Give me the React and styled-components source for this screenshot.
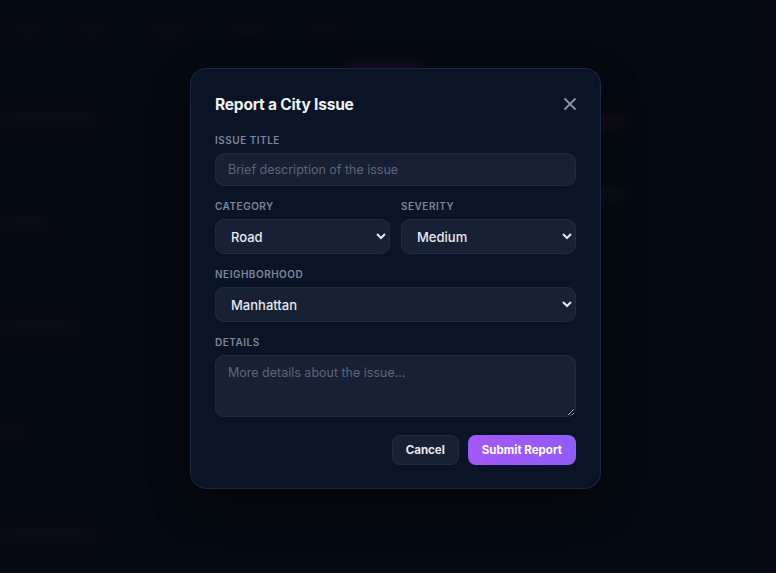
import React from 'react'
import styled, { createGlobalStyle } from 'styled-components'

const Global = createGlobalStyle`
  html, body {
    margin: 0;
    padding: 0;
    background: #070b15;
    font-family: Inter, "Noto Sans", sans-serif;
    color-scheme: dark;
  }
  * { box-sizing: border-box; }
`

const Page = styled.div`
  position: relative;
  width: 776px;
  height: 573px;
  overflow: hidden;
  background: #070b15;
`

/* blurred dashboard behind the modal */
const Backdrop = styled.div`
  height: 100%;
  display: flex;
  flex-direction: column;
  filter: blur(6px);
  opacity: 0.45;
`

const Nav = styled.nav`
  display: flex;
  gap: 38px;
  padding: 26px 0 0 10px;
  height: 60px;
`

const NavItem = styled.span`
  width: ${p => p.$w}px;
  height: 8px;
  border-radius: 4px;
  background: #1a2235;
`

const Body = styled.div`
  display: grid;
  grid-template-columns: 190px 1fr 200px;
  flex: 1;
`

const SideList = styled.div`
  display: flex;
  flex-direction: column;
  gap: 90px;
  padding-top: 52px;
`

const SideItem = styled.div`
  width: ${p => p.$w}px;
  height: 14px;
  border-radius: 6px;
  background: #1a2235;
`

const Center = styled.div`
  display: flex;
  flex-direction: column;
  align-items: center;
  padding-top: 4px;
`

const Pill = styled.div`
  width: 80px;
  height: 12px;
  border-radius: 6px;
  background: #4b2a7a;
`

const RightList = styled.div`
  display: flex;
  flex-direction: column;
  gap: 60px;
  padding: 56px 0 0 10px;
`

const Dot = styled.div`
  width: 40px;
  height: 12px;
  border-radius: 6px;
  background: ${p => p.$c};
`

const Overlay = styled.div`
  position: absolute;
  inset: 0;
  background: rgba(4, 7, 14, 0.45);
  display: flex;
  justify-content: center;
  padding-top: 68px;
  padding-left: 15px;
`

const Modal = styled.div`
  width: 411px;
  height: 421px;
  background: #0b1427;
  border: 1px solid #1c2740;
  border-radius: 16px;
  padding: 25px 24px 24px;
  box-shadow: 0 16px 40px rgba(0, 0, 0, 0.35);
  display: flex;
  flex-direction: column;
`

const Header = styled.div`
  display: flex;
  align-items: center;
  justify-content: space-between;
  margin-bottom: 20px;
`

const Title = styled.h2`
  margin: 0;
  font-size: 15.5px;
  font-weight: 700;
  color: #eef1f6;
  letter-spacing: -0.2px;
`

const Close = styled.button`
  border: 0;
  background: none;
  padding: 0;
  margin-right: -4px;
  display: flex;
  color: #8a95a8;
  cursor: pointer;
`

const Field = styled.div`
  display: flex;
  flex-direction: column;
  gap: 7px;
  margin-bottom: 14px;
`

const Row = styled.div`
  display: grid;
  grid-template-columns: 1fr 1fr;
  gap: 11px;
`

const Label = styled.label`
  font-size: 10px;
  font-weight: 600;
  letter-spacing: 0.5px;
  text-transform: uppercase;
  color: #7c879b;
`

const controlBase = `
  width: 100%;
  background: #172034;
  border: 1px solid #222c40;
  border-radius: 9px;
  font-family: Inter, "Noto Sans", sans-serif;
  color: #e6eaf1;
  outline: none;
  &::placeholder { color: #5d6679; }
`

const Input = styled.input`
  ${controlBase}
  height: 33px;
  padding: 0 12px;
  font-size: 12.5px;
`

const Select = styled.select`
  ${controlBase}
  height: 35px;
  padding: 0 4px 0 11px;
  font-size: 13px;
  font-weight: 500;
`

const TextArea = styled.textarea`
  ${controlBase}
  height: 62px;
  padding: 9px 12px;
  font-size: 12.5px;
  resize: vertical;
`

const Actions = styled.div`
  display: flex;
  justify-content: flex-end;
  gap: 9px;
  margin-top: 4px;
`

const Button = styled.button`
  height: 30px;
  padding: 0 13px;
  border-radius: 8px;
  font-family: Inter, "Noto Sans", sans-serif;
  font-size: 11.5px;
  font-weight: 700;
  cursor: pointer;
  border: 1px solid ${p => (p.$primary ? 'transparent' : '#222c40')};
  color: ${p => (p.$primary ? '#fff' : '#e6eaf1')};
  background: ${p => (p.$primary ? 'linear-gradient(90deg, #a458f5, #8f5cf6)' : '#172034')};
`

const App = () => {
  return (
    <Page>
      <Global />
      <Backdrop>
        <Nav>
          <NavItem $w={30} />
          <NavItem $w={30} />
          <NavItem $w={45} />
          <NavItem $w={40} />
          <NavItem $w={30} />
        </Nav>
        <Body>
          <SideList>
            <SideItem $w={100} />
            <SideItem $w={50} />
            <SideItem $w={80} />
            <SideItem $w={25} />
            <SideItem $w={95} />
          </SideList>
          <Center>
            <Pill />
          </Center>
          <RightList>
            <Dot $c="#4a1c2c" />
            <Dot $c="#123a2a" />
          </RightList>
        </Body>
      </Backdrop>

      <Overlay>
        <Modal>
          <Header>
            <Title>Report a City Issue</Title>
            <Close aria-label="Close">
              <svg width="20" height="20" viewBox="0 0 24 24" fill="none" stroke="currentColor" strokeWidth="2.2" strokeLinecap="round">
                <path d="M18 6 6 18M6 6l12 12" />
              </svg>
            </Close>
          </Header>

          <Field>
            <Label>Issue Title</Label>
            <Input placeholder="Brief description of the issue" />
          </Field>

          <Row>
            <Field>
              <Label>Category</Label>
              <Select defaultValue="Road">
                <option>Road</option>
                <option>Lighting</option>
                <option>Water</option>
              </Select>
            </Field>
            <Field>
              <Label>Severity</Label>
              <Select defaultValue="Medium">
                <option>Low</option>
                <option>Medium</option>
                <option>High</option>
              </Select>
            </Field>
          </Row>

          <Field>
            <Label>Neighborhood</Label>
            <Select defaultValue="Manhattan">
              <option>Manhattan</option>
              <option>Brooklyn</option>
              <option>Queens</option>
            </Select>
          </Field>

          <Field>
            <Label>Details</Label>
            <TextArea placeholder="More details about the issue..." />
          </Field>

          <Actions>
            <Button>Cancel</Button>
            <Button $primary>Submit Report</Button>
          </Actions>
        </Modal>
      </Overlay>
    </Page>
  )
}

export default App
